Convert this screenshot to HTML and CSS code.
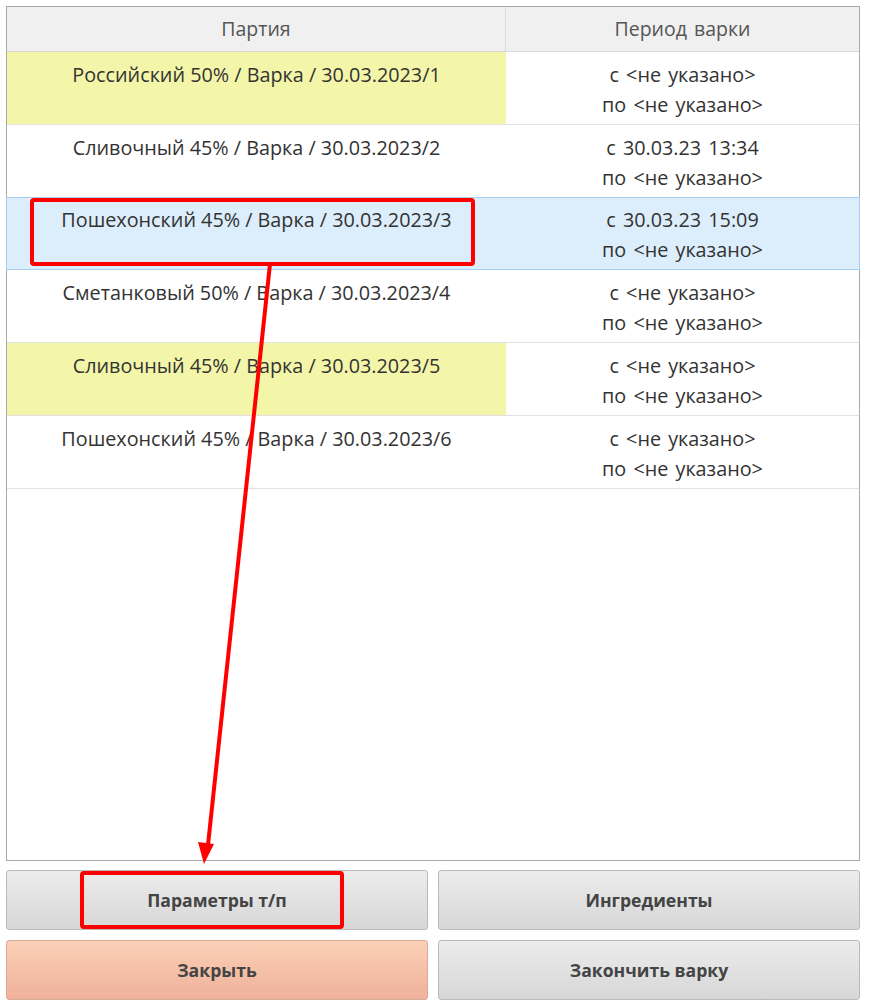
FILE: index.html
```html
<!DOCTYPE html>
<html lang="ru">
<head>
<meta charset="utf-8">
<link rel="stylesheet" href="styles.css">
</head>
<body>
<div class="page">
  <div class="table">
    <div class="row head">
      <div class="cell c1">Партия</div>
      <div class="cell c2">Период варки</div>
    </div>
    <div class="row">
      <div class="cell c1 yellow">Российский 50% / Варка / 30.03.2023/1</div>
      <div class="cell c2">с &lt;не указано&gt;<br>по &lt;не указано&gt;</div>
    </div>
    <div class="row">
      <div class="cell c1">Сливочный 45% / Варка / 30.03.2023/2</div>
      <div class="cell c2">с 30.03.23 13:34<br>по &lt;не указано&gt;</div>
    </div>
    <div class="row selected">
      <div class="cell c1">Пошехонский 45% / Варка / 30.03.2023/3</div>
      <div class="cell c2">с 30.03.23 15:09<br>по &lt;не указано&gt;</div>
    </div>
    <div class="row">
      <div class="cell c1">Сметанковый 50% / Варка / 30.03.2023/4</div>
      <div class="cell c2">с &lt;не указано&gt;<br>по &lt;не указано&gt;</div>
    </div>
    <div class="row">
      <div class="cell c1 yellow">Сливочный 45% / Варка / 30.03.2023/5</div>
      <div class="cell c2">с &lt;не указано&gt;<br>по &lt;не указано&gt;</div>
    </div>
    <div class="row">
      <div class="cell c1">Пошехонский 45% / Варка / 30.03.2023/6</div>
      <div class="cell c2">с &lt;не указано&gt;<br>по &lt;не указано&gt;</div>
    </div>
  </div>
  <div class="buttons">
    <button class="btn">Параметры т/п</button>
    <button class="btn">Ингредиенты</button>
    <button class="btn close">Закрыть</button>
    <button class="btn">Закончить варку</button>
  </div>
  <svg class="overlay" width="879" height="1008" viewBox="0 0 879 1008">
    <rect x="32" y="200" width="441" height="64" fill="none" stroke="#ff0000" stroke-width="4" rx="2"/>
    <rect x="82" y="873" width="260" height="54" fill="none" stroke="#ff0000" stroke-width="4" rx="2"/>
    <line x1="270" y1="264" x2="208" y2="845" stroke="#ff0000" stroke-width="4"/>
    <polygon points="198,842 214,844 204,864" fill="#ff0000"/>
  </svg>
</div>
</body>
</html>
```
FILE: styles.css
```css
* { box-sizing: border-box; }
html, body { margin: 0; padding: 0; background: #fff; }
body { font-family: "Open Sans", "Noto Sans", sans-serif; color: #333; }
.page { position: relative; width: 879px; height: 1008px; padding: 6px 19px 0 6px; }
.table {
  height: 855px;
  border: 1px solid #a9a9a9;
  background: #fff;
}
.row {
  display: grid;
  grid-template-columns: 499px 1fr;
  height: 73px;
  border-bottom: 1px solid #e2e2e2;
}
.row.head {
  height: 45px;
  background: #f0f0f0;
  border-bottom: 1px solid #d9d9d9;
}
.row.head .cell {
  color: #555;
  padding-top: 9px;
  line-height: 26px;
  font-size: 19.5px;
}
.row.head .c1 { border-right: 1px solid #dcdcdc; }
.cell {
  text-align: center;
  font-size: 19.8px;
  line-height: 30px;
  padding-top: 8px;
}
.c2 { word-spacing: 2px; }
.yellow { background: #f3f6a9; }
.row.selected {
  background: #dcedfb;
  border: 1px solid #a7cff0;
  margin: -1px -1px 0;
  height: 73px;
}
.row.selected .cell { padding-top: 7px; }
.buttons {
  display: grid;
  grid-template-columns: 1fr 1fr;
  gap: 10px;
  margin-top: 9px;
}
.btn {
  height: 60px;
  border: 1px solid #b9b9b9;
  border-radius: 3px;
  background: linear-gradient(#ececec, #d7d7d7);
  font-family: "Open Sans", "Noto Sans", sans-serif;
  font-weight: 700;
  font-size: 17.6px;
  color: #444;
}
.btn.close {
  background: linear-gradient(#fbd0b6, #f0b19b);
  border-color: #d9aa98;
}
.overlay { position: absolute; left: 0; top: 0; pointer-events: none; }
```
